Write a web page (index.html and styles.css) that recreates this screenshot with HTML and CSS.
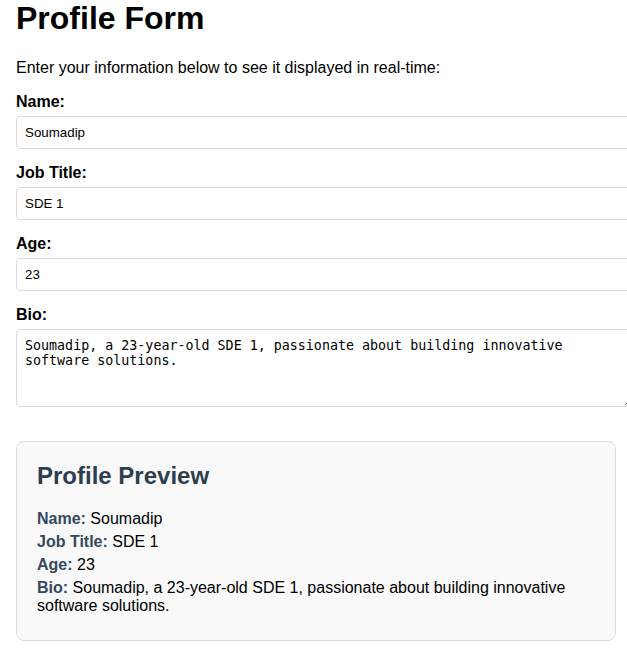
FILE: index.html
```html
<!DOCTYPE html>
<html lang="en">
<head>
<meta charset="utf-8">
<title>Profile Form</title>
<link rel="stylesheet" href="styles.css">
</head>
<body>
<div class="container">
  <h1 class="title">Profile Form</h1>
  <p class="intro">Enter your information below to see it displayed in real-time:</p>
  <form class="form">
    <div class="group">
      <label class="label" for="name">Name:</label>
      <input class="field" id="name" type="text" value="Soumadip">
    </div>
    <div class="group">
      <label class="label" for="job">Job Title:</label>
      <input class="field" id="job" type="text" value="SDE 1">
    </div>
    <div class="group">
      <label class="label" for="age">Age:</label>
      <input class="field" id="age" type="text" value="23">
    </div>
    <div class="group">
      <label class="label" for="bio">Bio:</label>
      <textarea class="field area" id="bio">Soumadip, a 23-year-old SDE 1, passionate about building innovative software solutions.</textarea>
    </div>
  </form>
  <div class="preview">
    <h2 class="preview-title">Profile Preview</h2>
    <p class="row"><strong class="key">Name:</strong> Soumadip</p>
    <p class="row"><strong class="key">Job Title:</strong> SDE 1</p>
    <p class="row"><strong class="key">Age:</strong> 23</p>
    <p class="row"><strong class="key">Bio:</strong> Soumadip, a 23-year-old SDE 1, passionate about building innovative software solutions.</p>
  </div>
</div>
</body>
</html>
```

FILE: styles.css
```css
html, body {
  overflow-x: hidden;
}
body {
  margin: 0;
  font-family: "Liberation Sans", Arial, sans-serif;
  color: #000;
  background: #fff;
}
.container {
  width: 600px;
  margin-left: 16px;
}
.title {
  font-size: 32px;
  font-weight: bold;
  margin: 0 0 22.44px;
}
.intro {
  font-size: 16px;
  margin: 16px 0;
}
.form {
  margin: 0;
}
.group {
  margin-bottom: 15px;
}
.group:last-child {
  margin-bottom: 0;
}
.label {
  display: block;
  font-weight: bold;
  font-size: 16px;
  margin-bottom: 5px;
}
.field {
  display: block;
  box-sizing: content-box;
  width: 100%;
  padding: 8px;
  margin: 0;
  border: 1px solid #ddd;
  border-radius: 4px;
  font-family: "Liberation Sans", Arial, sans-serif;
  font-size: 13.333px;
  color: #000;
  background: #fff;
}
.area {
  height: 60px;
  font-family: "DejaVu Sans Mono", monospace;
  font-size: 13.333px;
  resize: both;
}
.preview {
  margin-top: 34px;
  padding: 20px;
  background: #f9f9f9;
  border: 1px solid #ddd;
  border-radius: 8px;
}
.preview-title {
  margin: 0 0 19.92px;
  font-size: 24px;
  font-weight: bold;
  color: #2c3e50;
}
.row {
  margin: 5px 0;
  font-size: 16px;
  color: #000;
}
.row:first-of-type {
  margin-top: 0;
}
.key {
  color: #34495e;
}
```
